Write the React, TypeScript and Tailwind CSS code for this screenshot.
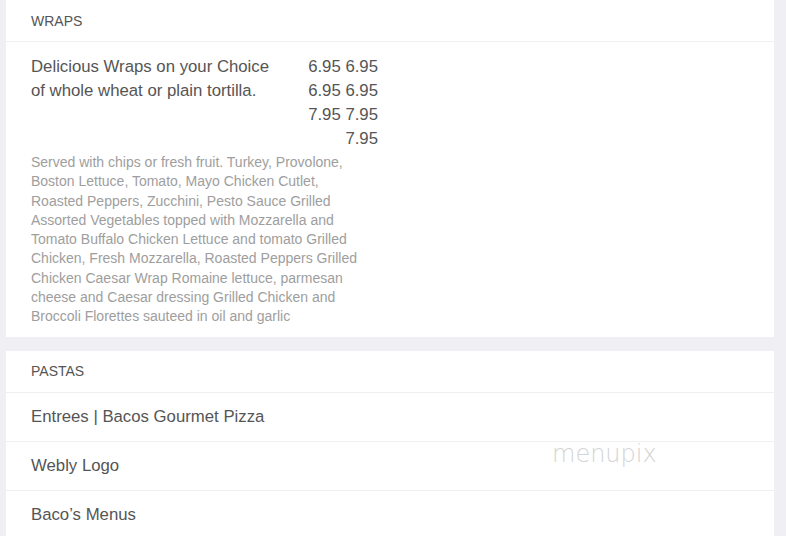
import React from "react";

const desc =
  "Served with chips or fresh fruit. Turkey, Provolone, Boston Lettuce, Tomato, Mayo Chicken Cutlet, Roasted Peppers, Zucchini, Pesto Sauce Grilled Assorted Vegetables topped with Mozzarella and Tomato Buffalo Chicken Lettuce and tomato Grilled Chicken, Fresh Mozzarella, Roasted Peppers Grilled Chicken Caesar Wrap Romaine lettuce, parmesan cheese and Caesar dressing Grilled Chicken and Broccoli Florettes sauteed in oil and garlic";

export default function App() {
  return (
    <div
      className="w-[786px] h-[536px] overflow-hidden bg-[#efeff4] pl-[6px] pr-[12px]"
      style={{ fontFamily: "'Liberation Sans', Arial, sans-serif" }}
    >
      <div className="bg-white">
        <div className="h-[42px] pt-[2px] flex items-center px-[25px] border-b border-[#f0f0f3] text-[14px] text-[#555]">
          WRAPS
        </div>
        <div className="px-[25px] pt-[13px] pb-[10px]">
          <div className="flex w-[347px] justify-between text-[16.75px] leading-[24px] text-[#555]">
            <div>
              Delicious Wraps on your Choice
              <br />
              of whole wheat or plain tortilla.
            </div>
            <div className="text-right">
              6.95 6.95
              <br />
              6.95 6.95
              <br />
              7.95 7.95
              <br />
              7.95
            </div>
          </div>
          <p className="mt-[2px] w-[340px] text-[14px] leading-[19.3px] text-[#9e9e9e]">{desc}</p>
        </div>
      </div>
      <div className="h-[14px]" />
      <div className="bg-white relative">
        <div className="h-[42px] pt-[1px] flex items-center px-[25px] border-b border-[#f0f0f3] text-[14px] text-[#555]">
          PASTAS
        </div>
        {["Entrees | Bacos Gourmet Pizza", "Webly Logo", "Baco\u2019s Menus"].map((t) => (
          <div
            key={t}
            className="h-[49px] flex items-center px-[25px] border-b border-[#f0f0f3] text-[16.75px] text-[#555]"
          >
            {t}
          </div>
        ))}
        <div
          className="absolute left-[546px] top-[85px] text-[24px] text-[#d4d4d4]"
          style={{ fontFamily: "'DejaVu Sans', sans-serif", fontWeight: 200 }}
        >
          menupix
        </div>
      </div>
    </div>
  );
}
